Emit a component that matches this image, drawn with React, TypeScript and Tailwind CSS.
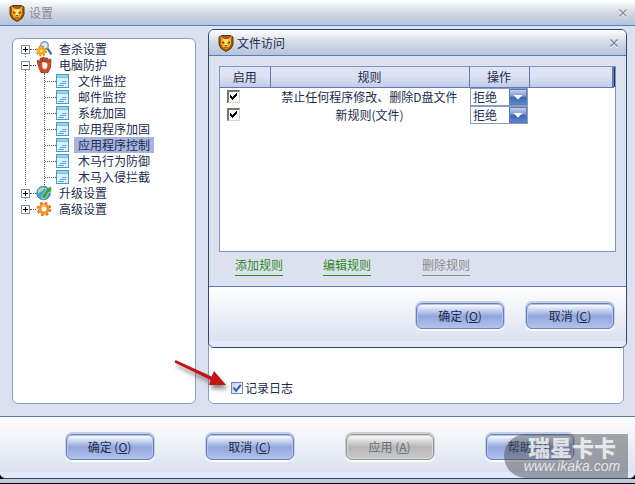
import { useState } from "react";
import type { ReactNode } from "react";

const treeChildren = [
  "文件监控",
  "邮件监控",
  "系统加固",
  "应用程序加固",
  "应用程序控制",
  "木马行为防御",
  "木马入侵拦截",
];

const rules = [
  { id: 1, name: "禁止任何程序修改、删除D盘文件" },
  { id: 2, name: "新规则(文件)" },
];

export default function App() {
  const [selected, setSelected] = useState("应用程序控制");

  return (
    <div className="flex min-h-screen flex-col bg-black pb-px font-['Noto_Sans_CJK_SC',sans-serif] text-xs text-[#1c2b4d]">
      <div className="flex flex-1 flex-col overflow-hidden rounded-b-md border-b border-[#32466f] bg-[#dce1ef]">
        <TitleBar title="设置" muted />

        <main className="flex flex-1 gap-3 py-3 pr-[11px] pl-3">
          <nav className="w-46 shrink-0 rounded-md border border-[#8a9cc4] bg-white pt-[2px] pl-2">
            <ul>
              <TreeRoot label="查杀设置" icon={<ScanIcon />} />
              <TreeRoot label="电脑防护" icon={<HandIcon />} open>
                <ul className="ml-[14px] border-l border-dotted border-[#555]">
                  {treeChildren.map((name) => (
                    <li key={name} className="flex h-4 items-center">
                      <span className="w-[11px] border-t border-dotted border-[#555]" />
                      <PageIcon />
                      <button
                        onClick={() => setSelected(name)}
                        className={
                          name === selected
                            ? "ml-[5px] h-4 bg-[#a8b4e0] px-1 leading-4"
                            : "ml-[5px] h-4 px-1 leading-4"
                        }
                      >
                        {name}
                      </button>
                    </li>
                  ))}
                </ul>
              </TreeRoot>
              <TreeRoot label="升级设置" icon={<GlobeIcon />} />
              <TreeRoot label="高级设置" icon={<GearIcon />} last />
            </ul>
          </nav>

          <section className="relative flex flex-1 items-end rounded-md border border-[#8a9cc4] bg-white pb-[7px] pl-[22px]">
            <label className="flex items-center gap-[2px] leading-4">
              <LogCheck />
              记录日志
            </label>
            <Arrow />
            <RulesDialog />
          </section>
        </main>

        <footer className="relative flex justify-center gap-[52px] border-t border-[#5b78b4] bg-linear-to-b from-white to-[#dce1ef] pt-[17px] pb-3 pl-1">
          <PushButton label="确定" hotkey="O" />
          <PushButton label="取消" hotkey="C" />
          <PushButton label="应用" hotkey="A" disabled />
          <PushButton label="帮助" hotkey="H" />
          <Watermark />
        </footer>
        <div className="h-[6px] bg-[#e3e9fa]" />
      </div>
      <div className="h-1 bg-[#c3c9d6]" />
    </div>
  );
}

function TitleBar({ title, muted }: { title: string; muted?: boolean }) {
  return (
    <header className="flex h-[26px] items-center border-b border-[#5b7cbc] bg-linear-to-b from-white via-[#d3dae5] to-[#b5c3d9] pr-[7px] pl-[9px]">
      <LionIcon />
      <h1 className={muted ? "ml-1 text-[#8a8a8a]" : "ml-[3px]"}>{title}</h1>
      <button aria-label="关闭" className={muted ? "ml-auto text-[#8f8f93]" : "ml-auto text-[#6f88b4]"}>
        <svg width="10" height="10" viewBox="0 0 10 10" fill="none">
          <path d="M1.500 2.500l7 7M8.500 2.500l-7 7" stroke="#fff" strokeWidth="1.400" />
          <path d="M1.500 1.500l7 7M8.500 1.500l-7 7" stroke="currentColor" strokeWidth="1.400" />
        </svg>
      </button>
    </header>
  );
}

function TreeRoot({
  label,
  icon,
  open,
  last,
  children,
}: {
  label: string;
  icon: ReactNode;
  open?: boolean;
  last?: boolean;
  children?: ReactNode;
}) {
  return (
    <li className="flex">
      <div className="flex w-[9px] flex-col items-center pt-1">
        <button
          aria-label={label}
          className="flex size-[9px] shrink-0 items-center justify-center border border-[#7b8ba8] bg-white"
        >
          <svg width="5" height="5" viewBox="0 0 5 5" shapeRendering="crispEdges">
            <path d="M0 2h5v1H0z" fill="#000" />
            {!open && <path d="M2 0h1v5H2z" fill="#000" />}
          </svg>
        </button>
        {!last && <span className="flex-1 border-l border-dotted border-[#555]" />}
      </div>
      <div>
        <div className="flex h-4 items-center">
          <span className="w-[6px] border-t border-dotted border-[#555]" />
          {icon}
          <span className="ml-[7px] leading-4">{label}</span>
        </div>
        {children}
      </div>
    </li>
  );
}

function RulesDialog() {
  return (
    <div
      role="dialog"
      aria-label="文件访问"
      className="absolute -top-[10px] -right-1 -left-px overflow-hidden rounded-md border border-[#32466f] bg-[#dce1ef]"
    >
      <TitleBar title="文件访问" />

      <div className="mx-[10px] mt-[10px] h-[186px] border border-[#7f93c0] bg-white">
        <table className="w-full table-fixed border-collapse">
          <thead>
            <tr className="h-5 bg-linear-to-b from-[#dfe4f3] via-[#dce1f1] to-[#c2cbe8]">
              <th className="w-[50px] border-r border-b border-[#5f79b4] font-normal">启用</th>
              <th className="border-r border-b border-[#5f79b4] font-normal">规则</th>
              <th className="w-[60px] border-r border-b border-[#5f79b4] font-normal">操作</th>
              <th className="w-[84px] border-r-2 border-b border-[#5f79b4]" />
              <th className="w-[2px] bg-[#26355c]" />
            </tr>
          </thead>
          <tbody>
            {rules.map((rule) => (
              <tr key={rule.id} className="h-[18px]">
                <td className="p-0 pl-[7px]">
                  <RuleCheck label={rule.name} />
                </td>
                <td className="p-0 text-center leading-[18px]">{rule.name}</td>
                <td className="p-0 pl-px">
                  <ActionSelect label={rule.name} />
                </td>
              </tr>
            ))}
          </tbody>
        </table>
      </div>

      <div className="flex h-[34px] items-start pt-1 pl-[26px] leading-[18px]">
        <a href="#add" className="border-b border-[#2f8a1e] pb-px text-[#2f8a1e]">
          添加规则
        </a>
        <a href="#edit" className="ml-10 border-b border-[#2f8a1e] pb-px text-[#2f8a1e]">
          编辑规则
        </a>
        <a href="#delete" className="ml-[51px] border-b border-[#8a8a8a] pb-px text-[#8a8a8a]">
          删除规则
        </a>
      </div>

      <div className="flex justify-end gap-[22px] border-t border-[#5b78b4] bg-linear-to-b from-white to-[#dce1ef] pt-4 pr-3 pb-3">
        <PushButton label="确定" hotkey="O" />
        <PushButton label="取消" hotkey="C" />
      </div>
      <div className="h-[6px] bg-[#e3e9fa]" />
    </div>
  );
}

function RuleCheck({ label }: { label: string }) {
  return (
    <span className="relative block size-[13px]">
      <input
        type="checkbox"
        defaultChecked
        aria-label={label}
        className="peer block size-[13px] appearance-none border-t-2 border-r border-b border-l-2 border-t-[#77746c] border-r-[#d8d4c8] border-b-[#d8d4c8] border-l-[#77746c] bg-white"
      />
      <svg
        className="pointer-events-none absolute top-[3px] left-[3px] hidden peer-checked:block"
        width="7"
        height="7"
        viewBox="0 0 7 7"
        shapeRendering="crispEdges"
      >
        <path d="M0 2h1v1h1v1h1V3h1V2h1V1h1V0h1v3H6v1H5v1H4v1H3v1H2V6H1V5H0z" fill="#000" />
      </svg>
    </span>
  );
}

function LogCheck() {
  return (
    <span className="relative block size-3">
      <input
        type="checkbox"
        defaultChecked
        className="peer block size-3 appearance-none border border-[#6b86bf] bg-linear-to-br from-[#c5d0ec] to-white"
      />
      <svg
        className="pointer-events-none absolute top-0 left-0 hidden peer-checked:block"
        width="12"
        height="12"
        viewBox="0 0 12 12"
      >
        <path d="M2.500 5.500l2.600 3.300 4.600-6" fill="none" stroke="#3a59a8" strokeWidth="2" />
      </svg>
    </span>
  );
}

function ActionSelect({ label }: { label: string }) {
  return (
    <span className="relative block h-[18px] w-[58px]">
      <select
        aria-label={label}
        className="block h-[18px] w-full appearance-none border border-[#8a9cc4] bg-white pl-[2px] leading-4"
      >
        <option>拒绝</option>
        <option>允许</option>
      </select>
      <svg
        className="pointer-events-none absolute top-px right-px"
        width="18"
        height="16"
        viewBox="0 0 18 16"
      >
        <defs>
          <linearGradient id="drop" x1="0" y1="0" x2="0" y2="1">
            <stop offset="0" stopColor="#c3d1ea" />
            <stop offset=".45" stopColor="#7d9ad0" />
            <stop offset=".5" stopColor="#3f66b0" />
            <stop offset="1" stopColor="#5c87cf" />
          </linearGradient>
        </defs>
        <rect x=".5" y=".5" width="17" height="15" fill="url(#drop)" stroke="#5f79b4" />
        <path d="M4.500 6h9L9 10.500z" fill="#fff" />
      </svg>
    </span>
  );
}

function PushButton({ label, hotkey, disabled }: { label: string; hotkey: string; disabled?: boolean }) {
  return (
    <button
      disabled={disabled}
      className={
        disabled
          ? "h-[26px] w-22 rounded-md border border-[#969696] bg-linear-to-b from-[#f8f8f8] from-5% via-[#b6b6b6] via-50% to-[#cbcbcb] text-[#68707f] shadow-[inset_0_0_0_1px_#d6d6d6,0_-1px_0_1px_#cdd1d6,0_1px_0_1px_#fbfcff]"
          : "h-[26px] w-22 rounded-md border border-[#6a80b8] bg-linear-to-b from-[#f8faff] from-5% via-[#93a6dd] via-50% to-[#b4c1ea] shadow-[inset_0_0_0_1px_#b3c2ea,0_-1px_0_1px_#c3d0e3,0_1px_0_1px_#fbfcff]"
      }
    >
      {label} (<u>{hotkey}</u>)
    </button>
  );
}

function Watermark() {
  return (
    <div className="absolute top-[17px] right-[7px] flex h-11 w-31 flex-col items-center rounded-l-3xl bg-[#4c5058]/50 pl-3 text-white/75">
      <span className="text-[22px] leading-6 font-black">瑞星卡卡</span>
      <span className="font-['Liberation_Sans',sans-serif] text-sm leading-4 italic">www.ikaka.com</span>
    </div>
  );
}

function Arrow() {
  return (
    <svg
      className="pointer-events-none absolute bottom-2 -left-9"
      width="60"
      height="36"
      viewBox="0 0 60 36"
    >
      <defs>
        <filter id="soft" x="-20%" y="-20%" width="150%" height="160%">
          <feDropShadow dx="2" dy="4" stdDeviation="2" floodColor="#000" floodOpacity=".45" />
        </filter>
      </defs>
      <path d="M2.500 1L38.500 17.500 41 12 53 26 36 26 37.500 21 1.500 3.500z" fill="#c01319" filter="url(#soft)" />
    </svg>
  );
}

function LionIcon() {
  return (
    <svg width="16" height="18" viewBox="0 0 16 18">
      <path d="M1 3l3-1.500h8L15 3v7.500l-2 4L8 17.500l-5-3-2-4z" fill="#a8590c" stroke="#5c3a12" />
      <path d="M3 4l3 1h4l3-1v6l-2 3.500-3 2-3-2L3 10z" fill="#f3ad25" />
      <path d="M5 4.500l3 1 3-1-1.500 4.500L10 11H6l.5-2z" fill="#ffe279" />
      <path d="M3.800 7.500l2.700 1v1l-2.300-.3zM12.200 7.500l-2.700 1v1l2.300-.3zM6.800 11h2.400L8 12.200zM6 13.500h4v.8H6z" fill="#643508" />
      <path d="M2.500 3l2 1.500M13.500 3l-2 1.500" stroke="#ffd252" />
    </svg>
  );
}

function ScanIcon() {
  return (
    <svg width="16" height="16" viewBox="0 0 16 16">
      <circle cx="8.500" cy="4.500" r="3.800" fill="#dcebf7" stroke="#7d9fc6" strokeWidth="1.500" />
      <path d="M11.500 7.500l4 6" stroke="#36699c" strokeWidth="2.200" />
      <circle cx="5.500" cy="10" r="4.600" fill="none" stroke="#d98a12" strokeWidth="1.800" strokeDasharray="2 1.610" />
      <circle cx="5.500" cy="10" r="2.700" fill="#fbe3a8" stroke="#f2a928" strokeWidth="2.800" />
    </svg>
  );
}

function HandIcon() {
  return (
    <svg width="16" height="16" viewBox="0 0 16 16">
      <path d="M1 4l1.500-1 1.500 3V1.500L6 1l.5 4V.5h2L9 5l.5-4h2l.5 4 1-3 2 .5-.5 8-2.500 5H5L3 11z" fill="#c9512c" stroke="#8a2f18" strokeWidth=".8" />
      <path d="M6 5.500l3-.5 2.500 2-.3 3.500L9 12.500 6.500 11z" fill="#fff1e8" />
    </svg>
  );
}

function PageIcon() {
  return (
    <svg width="13" height="14" viewBox="0 0 13 14">
      <rect x=".5" y=".5" width="12" height="13" fill="#d9effa" stroke="#4d9bc9" />
      <path d="M1 1h11v3H1z" fill="#74bfe4" />
      <path d="M1.500 2h10" stroke="#c4e8f8" />
      <path d="M6 7.500H10.500M4 9.500h6M2.500 11.500H8" stroke="#5aa6d2" />
    </svg>
  );
}

function GlobeIcon() {
  return (
    <svg width="16" height="16" viewBox="0 0 16 16">
      <circle cx="7.500" cy="8" r="6.800" fill="#4a9dce" stroke="#2b6ea5" strokeWidth=".8" />
      <path d="M2 4.500L6 2l3 1-2 2.500-3 1.500-2 2z" fill="#a6dcb0" />
      <path d="M6 10L10.500 5 9 3.500l6.500-2-.5 7-2-1.500-3.500 6-3.500 1z" fill="#37a343" stroke="#e7f6df" strokeWidth=".6" />
    </svg>
  );
}

function GearIcon() {
  return (
    <svg width="16" height="16" viewBox="0 0 16 16">
      <circle cx="8" cy="8" r="6.200" fill="none" stroke="#d9781c" strokeWidth="2.200" strokeDasharray="2.800 2.070" />
      <circle cx="8" cy="8" r="4.100" fill="#fff" stroke="#ec9434" strokeWidth="3.200" />
      <path d="M5 6a4 4 0 0 1 4-2" fill="none" stroke="#ffd49a" />
    </svg>
  );
}
